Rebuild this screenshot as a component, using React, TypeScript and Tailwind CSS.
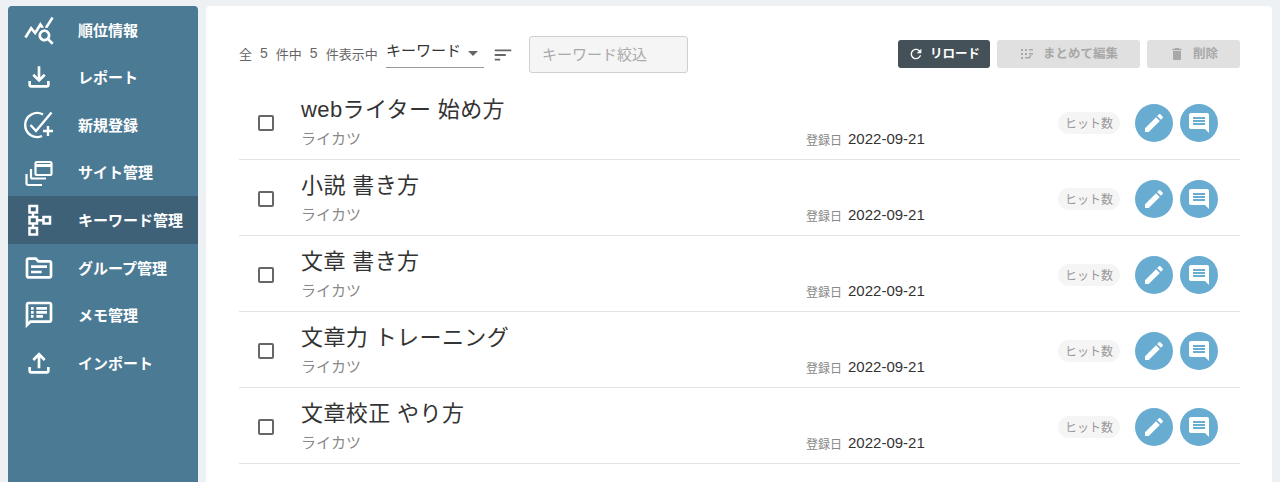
import React from "react";

const JP = "font-['Noto_Sans_CJK_JP','Noto_Sans',sans-serif]";

const Mi = ({ d, className }: { d: string; className?: string }) => (
  <svg viewBox="0 0 24 24" fill="currentColor" className={className}>
    <path d={d} />
  </svg>
);

const paths = {
  stats:
    "M19.88 18.47c.44-.7.7-1.51.7-2.39 0-2.49-2.01-4.5-4.5-4.5s-4.5 2.01-4.5 4.5 2.01 4.5 4.49 4.5c.88 0 1.7-.26 2.39-.7L21.58 23 23 21.58l-3.12-3.11zm-3.8.11c-1.38 0-2.5-1.12-2.5-2.5s1.12-2.5 2.5-2.5 2.5 1.12 2.5 2.5-1.12 2.5-2.5 2.5zm-.36-8.5c-.74.02-1.45.18-2.1.45l-.55-.83-3.8 6.18-3.01-3.52-3.63 5.81L1 17l5-8 3 3.5L13 6l2.72 4.08zm2.59.5c-.64-.28-1.33-.45-2.05-.49L21.38 2 23 3.18l-4.69 7.4z",
  download:
    "M18 15v3H6v-3H4v3c0 1.1.9 2 2 2h12c1.1 0 2-.9 2-2v-3h-2zm-1-4l-1.41-1.41L13 12.17V4h-2v8.17L8.41 9.59 7 11l5 5 5-5z",
  upload:
    "M18 15v3H6v-3H4v3c0 1.1.9 2 2 2h12c1.1 0 2-.9 2-2v-3h-2zM7 9l1.41 1.41L11 7.83V16h2V7.83l2.59 2.58L17 9l-5-5-5 5z",
  topic:
    "M20 6h-8l-2-2H4c-1.1 0-2 .9-2 2v12c0 1.1.9 2 2 2h16c1.1 0 2-.9 2-2V8c0-1.1-.9-2-2-2zm0 12H4V6h5.17l1.41 1.41.59.59H20v10zm-2-6H6v-2h12v2zm-4 4H6v-2h8v2z",
  memo:
    "M20 2H4c-1.1 0-2 .9-2 2v18l4-4h14c1.1 0 2-.9 2-2V4c0-1.1-.9-2-2-2zm0 14H5.17L4 17.17V4h16v12zM6 12h2v2H6zm0-3h2v2H6zm0-3h2v2H6zm4 6h5v2h-5zm0-3h8v2h-8zm0-3h8v2h-8z",
  edit:
    "M3 17.25V21h3.75L17.81 9.94l-3.75-3.75L3 17.25zM20.71 7.04c.39-.39.39-1.02 0-1.41l-2.34-2.34c-.39-.39-1.02-.39-1.41 0l-1.83 1.83 3.75 3.75 1.83-1.83z",
  comment:
    "M21.99 4c0-1.1-.89-2-1.99-2H4c-1.1 0-2 .9-2 2v12c0 1.1.9 2 2 2h14l4 4-.01-18zM18 14H6v-2h12v2zm0-3H6V9h12v2zm0-3H6V6h12v2z",
  refresh:
    "M17.65 6.35C16.2 4.9 14.21 4 12 4c-4.42 0-7.99 3.58-7.99 8s3.57 8 7.99 8c3.73 0 6.84-2.55 7.73-6h-2.08c-.82 2.33-3.04 4-5.65 4-3.31 0-6-2.69-6-6s2.69-6 6-6c1.66 0 3.14.69 4.22 1.78L13 11h7V4l-2.35 2.35z",
  trash:
    "M6 19c0 1.1.9 2 2 2h8c1.1 0 2-.9 2-2V7H6v12zM19 4h-3.5l-1-1h-5l-1 1H5v2h14V4z",
  sort: "M3 18h6v-2H3v2zM3 6v2h18V6H3zm0 7h12v-2H3v2z",
};

const CheckPlus = () => (
  <svg viewBox="0 0 32 32" fill="none" stroke="currentColor" strokeWidth="2.4" className="h-8 w-8">
    <path d="M20 5.5A12 12 0 1 0 19 27" />
    <path d="M7.5 16l5.5 6L28.5 3.5" />
    <path d="M25 17v10M20 22h10" />
  </svg>
);

const Windows = () => (
  <svg viewBox="0 0 32 32" fill="none" stroke="currentColor" strokeWidth="2.2" className="h-8 w-8">
    <rect x="12.5" y="5" width="16" height="13" rx="1.5" />
    <path d="M12.5 8.5h16" strokeWidth="3" />
    <path d="M8 12v8a1.5 1.5 0 0 0 1.5 1.5H23" />
    <path d="M3.5 17v9.5A1.5 1.5 0 0 0 5 28h14" />
  </svg>
);

const Tree = () => (
  <svg viewBox="0 0 32 32" fill="none" stroke="currentColor" strokeWidth="2.5" className="h-8 w-8">
    <rect x="6.5" y="2" width="7.5" height="6.5" />
    <rect x="6.5" y="13" width="7.5" height="6.5" />
    <rect x="6.5" y="24" width="7.5" height="6.5" />
    <rect x="20.5" y="13" width="6.5" height="6.5" />
    <path d="M10 8.5V13M10 19.5V24M14 16.2h6.5" />
  </svg>
);

const nav: { label: string; icon: React.ReactNode; active?: boolean }[] = [
  { label: "順位情報", icon: <Mi d={paths.stats} className="h-8 w-8" /> },
  { label: "レポート", icon: <Mi d={paths.download} className="h-8 w-8" /> },
  { label: "新規登録", icon: <CheckPlus /> },
  { label: "サイト管理", icon: <Windows /> },
  { label: "キーワード管理", icon: <Tree />, active: true },
  { label: "グループ管理", icon: <Mi d={paths.topic} className="h-8 w-8" /> },
  { label: "メモ管理", icon: <Mi d={paths.memo} className="h-8 w-8" /> },
  { label: "インポート", icon: <Mi d={paths.upload} className="h-8 w-8" /> },
];

const keywords = ["webライター 始め方", "小説 書き方", "文章 書き方", "文章力 トレーニング", "文章校正 やり方"];

const Row = ({ title }: { title: string }) => (
  <div className="flex h-[76px] items-center border-b border-[#e3e3e3] pl-[19px] pt-[2px]">
    <div className="h-[16px] w-[16px] shrink-0 rounded-[2px] border-2 border-[#666]" />
    <div className="mb-[1px] ml-[27px] w-[505px] shrink-0">
      <div className="font-['Liberation_Sans','Noto_Sans_CJK_JP',sans-serif] text-[22px] leading-[30px] tracking-[0.4px] text-[#333]">
        {title}
      </div>
      <div className="mt-[2px] text-[15px] leading-[22px] text-[#888]">ライカツ</div>
    </div>
    <div className="mt-[34px] flex w-[252px] shrink-0 items-center">
      <span className="text-[12px] text-[#888]">登録日</span>
      <span className="ml-[6px] font-['Liberation_Sans',sans-serif] text-[15px] text-[#333]">2022-09-21</span>
    </div>
    <div className="flex h-[22px] w-[62px] shrink-0 items-center justify-center rounded-full bg-[#f5f5f5] text-[12px] text-[#999]">
      ヒット数
    </div>
    <button className="ml-[15px] flex h-[38px] w-[38px] shrink-0 items-center justify-center rounded-full bg-[#68acd2] text-white">
      <Mi d={paths.edit} className="h-6 w-6" />
    </button>
    <button className="ml-[7px] flex h-[38px] w-[38px] shrink-0 items-center justify-center rounded-full bg-[#68acd2] text-white">
      <Mi d={paths.comment} className="h-6 w-6" />
    </button>
  </div>
);

export default function App() {
  return (
    <div className={`flex h-[482px] gap-2 overflow-hidden bg-[#edf1f4] px-2 pt-1.5 ${JP}`}>
      <aside className="w-[190px] shrink-0 rounded-t-[4px] bg-[#4b7a94] text-white">
        {nav.map((item) => (
          <div
            key={item.label}
            className={`flex h-[47.6px] items-center gap-[23px] pl-[15px] ${item.active ? "bg-[#3e6178]" : ""}`}
          >
            <span className="flex h-8 w-8 shrink-0 items-center justify-center">{item.icon}</span>
            <span className="text-[15px] font-bold">{item.label}</span>
          </div>
        ))}
      </aside>

      <main className="w-[1066px] shrink-0 rounded-t-[4px] bg-white pl-[33px] pr-[32px] pt-[30px]">
        <div className="flex h-[37px] items-center">
          <div className="mb-[2px] flex w-[147px] shrink-0 items-center text-[13px] text-[#666]">
            <span>全</span>
            <span className="mx-[8px] font-['Liberation_Sans',sans-serif] text-[14px]">5</span>
            <span>件中</span>
            <span className="mx-[8px] font-['Liberation_Sans',sans-serif] text-[14px]">5</span>
            <span>件表示中</span>
          </div>
          <div className="mb-[3px] flex h-[30px] w-[98px] shrink-0 items-center justify-between border-b border-[#999] pb-1 text-[15px] text-[#333]">
            <span>キーワード</span>
            <svg viewBox="0 0 10 5" className="mr-[6px] mt-[6px] h-[5px] w-[10px] fill-[#666]">
              <path d="M0 0h10L5 5z" />
            </svg>
          </div>
          <Mi d={paths.sort} className="ml-[8px] h-[22px] w-[22px] shrink-0 text-[#666]" />
          <div className="ml-[15px] flex h-[37px] w-[159px] shrink-0 items-center rounded-[3px] border border-[#d0d0d0] bg-[#f5f5f5] pl-[12px] text-[15px] text-[#aaa]">
            キーワード絞込
          </div>
          <div className="mb-[2px] ml-auto flex items-center gap-[7px] text-[12.5px] font-bold">
            <button className="flex h-[28px] w-[92px] items-center justify-center gap-[6px] rounded-[3px] bg-[#455158] text-white">
              <Mi d={paths.refresh} className="h-4 w-4" />
              リロード
            </button>
            <button className="flex h-[28px] w-[143px] items-center justify-center gap-[8px] rounded-[3px] bg-[#e0e0e0] text-[#a8a8a8]">
              <svg viewBox="0 0 16 16" fill="currentColor" className="h-4 w-4">
                <path d="M2 3h2v2H2zM6 3h2v2H6zM2 7h2v2H2zM6 7h2v2H6zM2 11h2v2H2zM10 3h4v1.6h-4zM10 7h4v1.6h-4zM6 11h4l1-2h1.6l-1.6 3.6H6z" />
              </svg>
              まとめて編集
            </button>
            <button className="flex h-[28px] w-[93px] items-center justify-center gap-[8px] rounded-[3px] bg-[#e0e0e0] text-[#a8a8a8]">
              <Mi d={paths.trash} className="h-4 w-4" />
              削除
            </button>
          </div>
        </div>
        <div className="mt-[10px] pt-[1px]">
          {keywords.map((k) => (
            <Row key={k} title={k} />
          ))}
        </div>
      </main>
    </div>
  );
}
